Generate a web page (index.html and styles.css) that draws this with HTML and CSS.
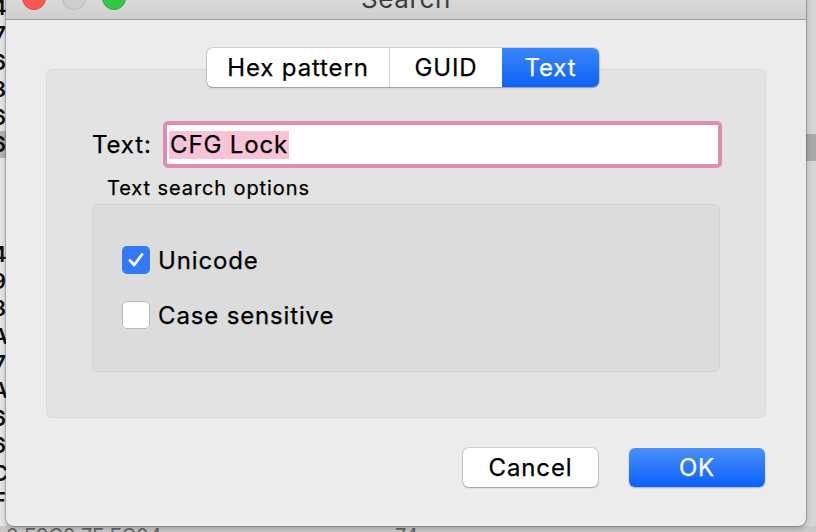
FILE: index.html
```html
<!DOCTYPE html>
<html>
<head>
<meta charset="utf-8">
<link rel="stylesheet" href="styles.css">
</head>
<body>
<div class="desktop">
  <div class="bg-col">
    <span>4</span><span>7</span><span>6</span><span>8</span><span>6</span><span class="sel">6</span>
    <span class="gap"></span><span class="gap"></span><span class="gap"></span>
    <span>4</span><span>9</span><span>8</span><span>A</span><span>7</span><span>A</span><span>6</span><span>6</span><span>C</span><span>F</span>
  </div>
  <div class="bg-right-sel"></div>
  <div class="bg-bottom">
    <span class="bt1">0 F9C2 7F  FC04 ...</span><span class="bt2">74</span>
  </div>

  <div class="window">
    <div class="titlebar">
      <div class="lights">
        <span class="light red"></span>
        <span class="light gray"></span>
        <span class="light green"></span>
      </div>
      <div class="title">Search</div>
    </div>
    <div class="content">
      <div class="segmented">
        <div class="seg seg-hex">Hex pattern</div>
        <div class="seg seg-guid">GUID</div>
        <div class="seg seg-text active">Text</div>
      </div>
      <div class="tabbox">
        <div class="field-row">
          <label class="field-label">Text:</label>
          <div class="field"><span class="selected">CFG Lock</span></div>
        </div>
        <div class="group-title">Text search options</div>
        <div class="group">
          <div class="check-row">
            <span class="checkbox checked">
              <svg viewBox="0 0 28 28" width="28" height="28"><path d="M8 14.5 L12.2 19 L20 8.5" fill="none" stroke="#fff" stroke-width="2.8" stroke-linecap="round" stroke-linejoin="round"/></svg>
            </span>
            <span class="check-label">Unicode</span>
          </div>
          <div class="check-row">
            <span class="checkbox"></span>
            <span class="check-label">Case sensitive</span>
          </div>
        </div>
      </div>
      <div class="buttons">
        <div class="btn cancel">Cancel</div>
        <div class="btn ok">OK</div>
      </div>
    </div>
  </div>
</div>
</body>
</html>
```

FILE: styles.css
```css
* { box-sizing: border-box; }
html, body { margin: 0; padding: 0; }
body {
  width: 816px;
  height: 532px;
  overflow: hidden;
  font-family: Inter, "Liberation Sans", sans-serif;
  color: #000;
}
.desktop {
  position: relative;
  width: 816px;
  height: 532px;
  background: #d6d6d6;
  overflow: hidden;
}
.bg-col {
  position: absolute;
  left: -8px;
  top: -6px;
  width: 14px;
  display: flex;
  flex-direction: column;
  background: #e6e6e6;
  height: 540px;
}
.bg-col span {
  height: 27.4px;
  line-height: 27.4px;
  font-size: 22px;
  font-weight: 600;
  text-align: right;
  color: #111;
}
.bg-col span.sel { background: #b4b4b4; }
.bg-right-sel {
  position: absolute;
  right: 0;
  top: 134px;
  width: 10px;
  height: 27px;
  background: #a9a9a9;
}
.bg-bottom {
  position: absolute;
  left: 0;
  top: 526px;
  width: 816px;
  height: 6px;
  background: #c9c9c9;
  font-size: 20px;
  color: #666;
  overflow: hidden;
}
.bt1 { position: absolute; left: 6px; top: 0; line-height: 20px; }
.bt2 { position: absolute; left: 395px; top: 0; line-height: 20px; }

.window {
  position: absolute;
  left: 6px;
  top: -24px;
  width: 800px;
  height: 550px;
  background: #ececec;
  border-radius: 0 0 8px 8px;
  box-shadow: 0 0 0 1px rgba(0,0,0,0.18), 0 2px 6px rgba(0,0,0,0.25);
  display: flex;
  flex-direction: column;
}
.titlebar {
  position: relative;
  height: 44px;
  background: linear-gradient(#e4e4e4, #cfcfcf);
  border-bottom: 1px solid #9e9e9e;
  flex: none;
}
.lights {
  display: flex;
  gap: 16px;
  padding: 10px 0 0 16px;
}
.light {
  width: 24px;
  height: 24px;
  border-radius: 50%;
}
.light.red { background: #fd5652; border: 1px solid #e0443e; }
.light.gray { background: #cfcfcf; border: 1px solid #b8b8b8; }
.light.green { background: #33c748; border: 1px solid #27aa35; }
.title {
  position: absolute;
  left: 0;
  right: 0;
  top: 8px;
  text-align: center;
  font-size: 26px;
  line-height: 30px;
  letter-spacing: 0.6px;
  color: #3c3c3c;
}
.content {
  flex: 1;
  display: flex;
  flex-direction: column;
  padding: 28px 40px 0 40px;
  letter-spacing: 0.85px;
  -webkit-text-stroke: 0.25px currentColor;
}
.segmented {
  position: relative;
  z-index: 1;
  align-self: center;
  display: flex;
  height: 39px;
  margin-left: -6px;
  margin-bottom: -18px;
  background: #fff;
  border-radius: 6px;
  box-shadow: 0 0 0 1px rgba(0,0,0,0.12), 0 1px 1.5px rgba(0,0,0,0.22);
  font-size: 24px;
}
.seg {
  display: flex;
  align-items: center;
  justify-content: center;
  height: 39px;
}
.seg-hex { width: 183px; border-right: 1px solid #d4d4d4; }
.seg-guid { width: 112px; }
.seg-text { width: 97px; }
.seg.active {
  background: linear-gradient(#3a86f9, #0e62f6);
  color: #fff;
  border-radius: 0 6px 6px 0;
}
.tabbox {
  background: #e3e3e3;
  border: 1px solid #d8d8d8;
  border-radius: 6px;
  height: 349px;
  padding: 51px 43px 0 45px;
  display: flex;
  flex-direction: column;
}
.field-row {
  display: flex;
  align-items: center;
  height: 47px;
}
.field-label {
  width: 71px;
  font-size: 24px;
}
.field {
  flex: 1;
  height: 47px;
  background: #fff;
  border: 4px solid #dc8db1;
  border-radius: 5px;
  padding-left: 2px;
  display: flex;
  align-items: center;
  font-size: 24px;
}
.selected {
  background: #f8c3d7;
  height: 28px;
  line-height: 28px;
  padding: 0 1px;
}
.group-title {
  margin-top: 8px;
  margin-left: 15px;
  font-size: 20px;
  line-height: 24px;
  height: 24px;
  letter-spacing: 0.9px;
}
.group {
  margin-top: 4px;
  width: 628px;
  height: 168px;
  background: #dcdcdc;
  border: 1px solid #d2d2d2;
  border-radius: 6px;
  padding: 41px 0 0 29px;
  display: flex;
  flex-direction: column;
  gap: 27px;
}
.check-row {
  display: flex;
  align-items: center;
  gap: 8px;
  height: 28px;
}
.checkbox {
  width: 28px;
  height: 28px;
  border-radius: 5px;
  background: #fff;
  box-shadow: inset 0 0 0 1px #b9b9b9;
  display: flex;
}
.checkbox.checked {
  background: #3478f6;
  box-shadow: none;
}
.check-label {
  font-size: 24px;
}
.buttons {
  display: flex;
  justify-content: flex-end;
  gap: 31px;
  margin-top: 30px;
  padding-right: 1px;
}
.btn {
  width: 135px;
  height: 39px;
  border-radius: 6px;
  display: flex;
  align-items: center;
  justify-content: center;
  font-size: 24px;
}
.btn.cancel {
  background: #fff;
  box-shadow: 0 0 0 1px rgba(0,0,0,0.12), 0 1px 1.5px rgba(0,0,0,0.25);
}
.btn.ok {
  width: 136px;
  background: linear-gradient(#4a90f9, #0a60fb);
  color: #fff;
  box-shadow: 0 1px 1.5px rgba(0,0,0,0.25);
}
```
